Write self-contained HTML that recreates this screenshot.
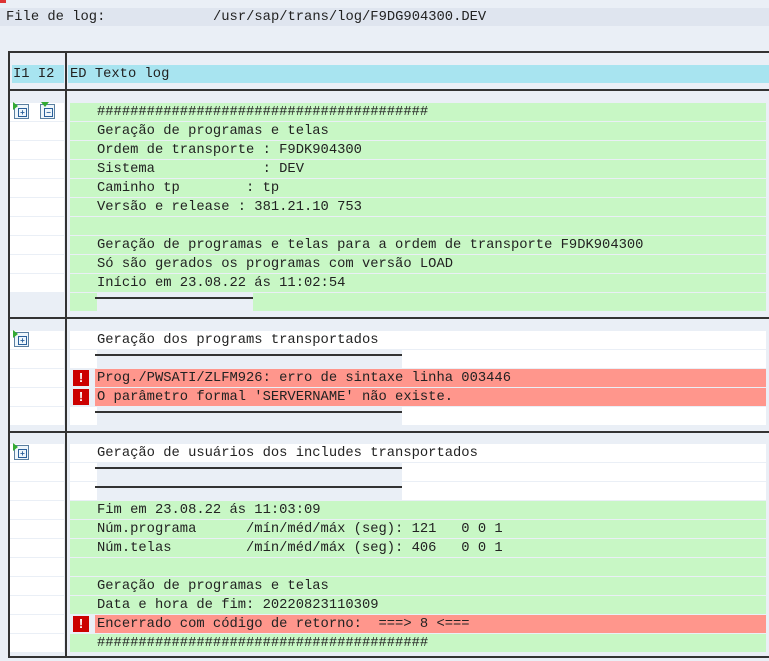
<!DOCTYPE html>
<html><head><meta charset="utf-8"><style>
body{margin:0;width:769px;height:661px;background:#eaeff6;position:relative;overflow:hidden;font-family:"Liberation Mono",monospace;font-size:13.8px;color:#222;}
.a{position:absolute}
.r{position:absolute;left:70px;right:3px;height:18px;line-height:18px;white-space:pre;padding-left:27px;padding-top:1px;box-sizing:border-box}
.g{background:#c8f7c5}.w{background:#fff}.e{background:#ff968c}
.lc{position:absolute;left:10px;width:54px;height:18px;background:#fff}
.ln{position:absolute;height:2px;background:#333}
.gap{position:absolute;left:97px;height:18px;background:#eaeff6}
.ex{position:absolute;left:73px;width:16px;height:16px;background:#c00;color:#fff;font:bold 13px "Liberation Sans",sans-serif;text-align:center;line-height:16px}
.ic{position:absolute;width:15px;height:15px;border:1px solid #5a7fa0;background:#eef6fb;box-sizing:border-box}
.ic span{position:absolute;left:3px;top:3px;width:7px;height:7px;border:1px solid #2a5f9a;font:bold 8px/7px "Liberation Sans";text-align:center;color:#2a5f9a}
</style></head><body>
<div class="a" style="left:0;top:0;width:6px;height:3px;background:#d33"></div>
<div class="a" style="left:0;top:8px;width:769px;height:18px;background:#dfe5ef"></div>
<div class="a" style="left:6px;top:9px;line-height:18px;white-space:pre">File de log:             /usr/sap/trans/log/F9DG904300.DEV</div>
<!-- table frame -->
<div class="a" style="left:8px;top:51px;width:761px;height:2px;background:#333"></div>
<div class="a" style="left:8px;top:51px;width:2px;height:607px;background:#333"></div>
<div class="a" style="left:65px;top:51px;width:2px;height:607px;background:#333"></div>
<div class="a" style="left:8px;top:89px;width:761px;height:2px;background:#333"></div>
<div class="a" style="left:8px;top:317px;width:761px;height:2px;background:#333"></div>
<div class="a" style="left:8px;top:431px;width:761px;height:2px;background:#333"></div>
<div class="a" style="left:8px;top:656px;width:761px;height:2px;background:#333"></div>
<div class="a" style="left:12px;top:65px;width:52px;height:18px;background:#a8e4f0;line-height:18px;white-space:pre;padding-top:1px;box-sizing:border-box;padding-left:1px">I1 I2</div>
<div class="a" style="left:68px;top:65px;right:0;height:18px;background:#a8e4f0;line-height:18px;white-space:pre;padding-top:1px;box-sizing:border-box;padding-left:2px">ED Texto log</div>

<!-- section 1 -->
<div class="lc" style="top:103px"></div><div class="lc" style="top:122px"></div><div class="lc" style="top:141px"></div><div class="lc" style="top:160px"></div><div class="lc" style="top:179px"></div><div class="lc" style="top:198px"></div><div class="lc" style="top:217px"></div><div class="lc" style="top:236px"></div><div class="lc" style="top:255px"></div><div class="lc" style="top:274px"></div>
<div class="ic" style="left:14px;top:104px"><span>+</span></div>
<div class="a" style="left:13px;top:102px;width:0;height:0;border-top:4px solid transparent;border-bottom:4px solid transparent;border-left:5px solid #3a3"></div>
<div class="ic" style="left:40px;top:104px"><span>−</span></div>
<div class="a" style="left:41px;top:102px;width:0;height:0;border-left:4px solid transparent;border-right:4px solid transparent;border-top:5px solid #3a3"></div>
<div class="r g" style="top:103px">########################################</div>
<div class="r g" style="top:122px">Geração de programas e telas</div>
<div class="r g" style="top:141px">Ordem de transporte : F9DK904300</div>
<div class="r g" style="top:160px">Sistema             : DEV</div>
<div class="r g" style="top:179px">Caminho tp        : tp</div>
<div class="r g" style="top:198px">Versão e release : 381.21.10 753</div>
<div class="r g" style="top:217px"></div>
<div class="r g" style="top:236px">Geração de programas e telas para a ordem de transporte F9DK904300</div>
<div class="r g" style="top:255px">Só são gerados os programas com versão LOAD</div>
<div class="r g" style="top:274px">Início em 23.08.22 ás 11:02:54</div>
<div class="r g" style="top:293px"></div>
<div class="gap" style="top:293px;width:156px;background:#eaeff6"></div>
<div class="ln" style="left:95px;width:158px;top:297px"></div>

<!-- section 2 -->
<div class="lc" style="top:331px"></div><div class="lc" style="top:350px"></div><div class="lc" style="top:369px"></div><div class="lc" style="top:388px"></div><div class="lc" style="top:407px"></div>
<div class="ic" style="left:14px;top:332px"><span>+</span></div>
<div class="a" style="left:13px;top:330px;width:0;height:0;border-top:4px solid transparent;border-bottom:4px solid transparent;border-left:5px solid #3a3"></div>
<div class="r w" style="top:331px">Geração dos programs transportados</div>
<div class="r w" style="top:350px"></div><div class="gap" style="top:350px;width:305px"></div>
<div class="ln" style="left:95px;width:307px;top:354px"></div>
<div class="r e" style="top:369px;left:95px;padding-left:2px">Prog./PWSATI/ZLFM926: erro de sintaxe linha 003446</div>
<div class="ex" style="top:370px">!</div>
<div class="r e" style="top:388px;left:95px;padding-left:2px">O parâmetro formal 'SERVERNAME' não existe.</div>
<div class="ex" style="top:389px">!</div>
<div class="r w" style="top:407px"></div><div class="gap" style="top:407px;width:305px"></div>
<div class="ln" style="left:95px;width:307px;top:411px"></div>

<!-- section 3 -->
<div class="lc" style="top:444px"></div><div class="lc" style="top:463px"></div><div class="lc" style="top:482px"></div><div class="lc" style="top:501px"></div><div class="lc" style="top:520px"></div><div class="lc" style="top:539px"></div><div class="lc" style="top:558px"></div><div class="lc" style="top:577px"></div><div class="lc" style="top:596px"></div><div class="lc" style="top:615px"></div><div class="lc" style="top:634px"></div>
<div class="ic" style="left:14px;top:445px"><span>+</span></div>
<div class="a" style="left:13px;top:443px;width:0;height:0;border-top:4px solid transparent;border-bottom:4px solid transparent;border-left:5px solid #3a3"></div>
<div class="r w" style="top:444px">Geração de usuários dos includes transportados</div>
<div class="r w" style="top:463px"></div><div class="gap" style="top:463px;width:305px"></div>
<div class="ln" style="left:95px;width:307px;top:467px"></div>
<div class="r w" style="top:482px"></div><div class="gap" style="top:482px;width:305px"></div>
<div class="ln" style="left:95px;width:307px;top:486px"></div>
<div class="r g" style="top:501px">Fim em 23.08.22 ás 11:03:09</div>
<div class="r g" style="top:520px">Núm.programa      /mín/méd/máx (seg): 121   0 0 1</div>
<div class="r g" style="top:539px">Núm.telas         /mín/méd/máx (seg): 406   0 0 1</div>
<div class="r g" style="top:558px"></div>
<div class="r g" style="top:577px">Geração de programas e telas</div>
<div class="r g" style="top:596px">Data e hora de fim: 20220823110309</div>
<div class="r e" style="top:615px;left:95px;padding-left:2px">Encerrado com código de retorno:  ===&gt; 8 &lt;===</div>
<div class="ex" style="top:616px">!</div>
<div class="r g" style="top:634px">########################################</div>
</body></html>
